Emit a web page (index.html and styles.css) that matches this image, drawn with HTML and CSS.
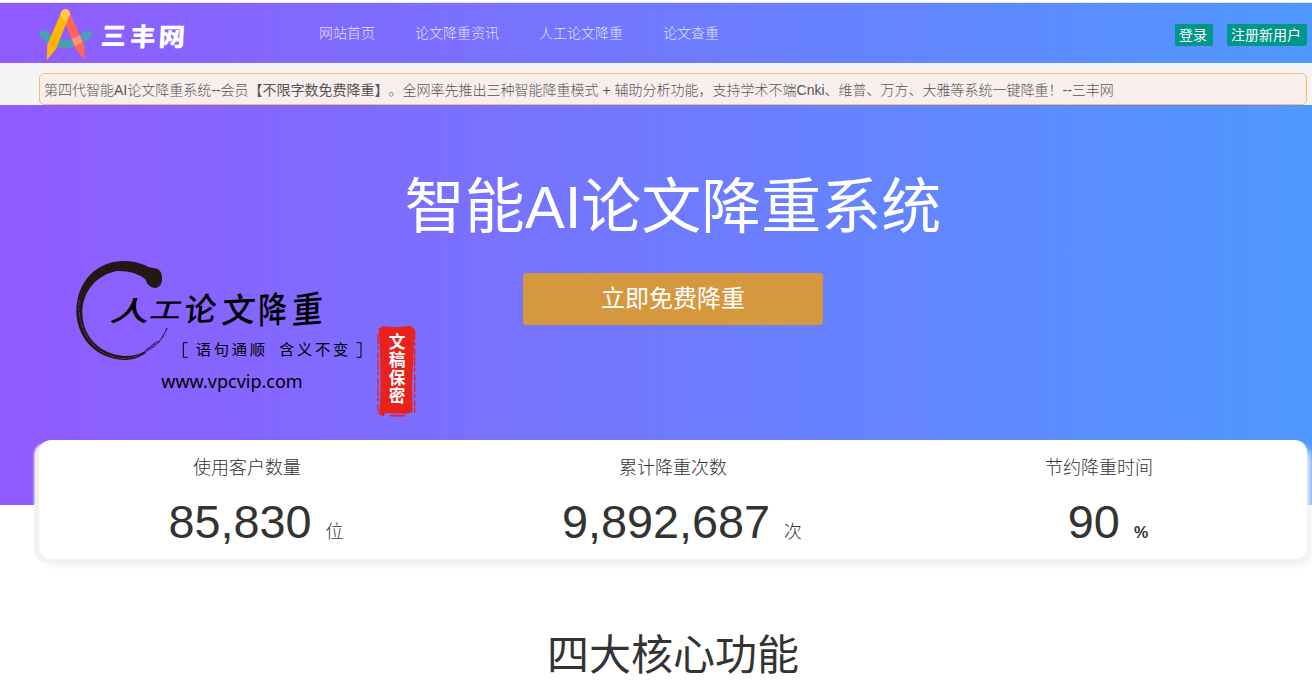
FILE: index.html
```
<!DOCTYPE html>
<html lang="zh-CN">
  <head>
    <title>智能AI论文降重系统</title>
    <meta charset="UTF-8">
    <meta name="viewport" content="width=device-width, initial-scale=1.0">
    <link rel="stylesheet" href="styles.css">
  </head>
  <body>
    <div class="header">
      <a class="logo">
        <svg width="165" height="58" viewBox="0 0 495 174">
          <path class="logo-smile" d="M40 88 Q106 146 173 88"/>
          <path class="logo-red" d="M95 30 A13 13 0 0 1 119 21 L162 120 L164 166 L137 132 Z"/>
          <path class="logo-cross" d="M125 101 L149 91 L158 112 L134 122 Z"/>
          <path class="logo-yellow" d="M94 21 A13 13 0 0 1 119 30 L78 132 L50 166 L52 120 Z"/>
          <path class="logo-dark" d="M58 105 L84 115 L79 130 L52 120 Z"/>
          <path class="logo-cap" d="M94 21 A13.500 13.500 0 0 1 119 21 L121 27 L108 55 L91 31 Z"/>
          <text class="logo-text" transform="translate(211 121) scale(.95 .95) skewX(-5)">三</text>
          <text class="logo-text" transform="translate(299 122) scale(.95 .95) skewX(-3)">丰</text>
          <text class="logo-text" transform="translate(384 122) scale(1 .95) skewX(-3)">网</text>
        </svg>
      </a>
      <div class="nav">
        <a>网站首页</a>
        <a>论文降重资讯</a>
        <a>人工论文降重</a>
        <a>论文查重</a>
      </div>
      <div class="user">
        <a class="btn">登录</a>
        <a class="btn">注册新用户</a>
      </div>
    </div>

    <div class="noticeBG">
      <div class="notice">第四代智能AI论文降重系统--会员<b>【不限字数免费降重】</b>。全网率先推出三种智能降重模式 + 辅助分析功能，支持学术不端Cnki、维普、万方、大雅等系统一键降重！--三丰网</div>
    </div>

    <div class="banner">
      <svg class="ad" width="370" height="180" viewBox="0 0 1110 540">
        <!-- brush circle -->
        <path class="ink" d="M306 92 Q310 60 285 54 Q268 56 255 46 Q215 28 165 35 C90 50 48 110 49 190 C54 270 110 325 190 330 C220 330 240 322 258 308 L254 304 C235 315 215 319 190 318 C120 312 68 260 67 190 C66 130 105 76 170 63 Q225 62 256 88 Q262 110 284 114 Q302 112 306 92Z"/>
        <path class="ink-tail" d="M254 304 C285 292 308 270 321 233"/>
        <path class="ink-tail2" d="M260 299 L292 274"/>
        <path class="ink-gap" d="M57 150 C50 235 95 312 180 325 C200 327 220 323 240 315"/>
        <g class="brush">
          <text transform="translate(148 213) scale(1.220 .85) skewX(-12)">人</text>
          <text transform="translate(266 203) scale(.97 .7) skewX(-12)">工</text>
          <text transform="translate(370 217) rotate(-4) skewX(-10)">论</text>
          <text transform="translate(482 219) rotate(-3) skewX(-8) scale(1.050 1.050)">文</text>
          <text transform="translate(595 222) rotate(-5) scale(.9 1.120) skewX(-6)">降</text>
          <text transform="translate(695 222) rotate(-5) scale(.96 1.120) skewX(-8)">重</text>
        </g>
        <path class="bracket" d="M383 278 H370 V322 H383 M890 278 H903 V322 H890"/>
        <text class="slogan" x="407" y="316" textLength="208">语句通顺</text>
        <text class="slogan" x="657" y="316" textLength="208">含义不变</text>
        <text class="site" x="304" y="414" textLength="424" lengthAdjust="spacingAndGlyphs">www.vpcvip.com</text>
        <!-- seal -->
        <path class="seal" d="M956 236 L968 229 L1008 232 L1050 227 L1063 236 L1060 330 L1056 400 L1058 486 L1040 491 L975 489 L972 499 L958 494 L962 420 L960 300 Z"/>
        <path class="seal-edge" d="M954 252 V488 M1064 240 V488"/>
        <path class="seal-foot" d="M990 497 H1036"/>
        <g class="seal-text">
          <text x="986" y="294">文</text>
          <text x="986" y="348">稿</text>
          <text x="986" y="402">保</text>
          <text x="986" y="456">密</text>
        </g>
      </svg>
      <div class="slide">
        <h1>智能AI论文降重系统</h1>
        <a class="start">立即免费降重</a>
      </div>
    </div>

    <div class="count">
      <div class="item">
        <p>使用客户数量</p>
        <div class="num">85,830<span>位</span></div>
      </div>
      <div class="item">
        <p>累计降重次数</p>
        <div class="num">9,892,687<span>次</span></div>
      </div>
      <div class="item">
        <p>节约降重时间</p>
        <div class="num">90<span class="percent">%</span></div>
      </div>
    </div>

    <h2>四大核心功能</h2>
  </body>
</html>
```
FILE: styles.css
```
* {
  box-sizing: border-box;
}
body {
  margin: 0;
  padding-top: 2px;
  font-family: "Liberation Sans", "Noto Sans CJK SC", sans-serif;
  font-size: 14px;
  font-weight: 300;
  text-spacing-trim: space-all;
  color: #333;
  background: #fff;
  overflow: hidden;
}
/* Top bar */
.header {
  display: flex;
  height: 61px;
  padding: 0 5px 0 30px;
  border-top: 1px solid #e6e6e6;
  background: linear-gradient(to right, #915bff, #4f98ff);
  background-clip: padding-box;
}
.logo {
  width: 289px;
  padding-top: 2px;
}
.logo svg {
  display: block;
}
.logo-smile {
  fill: none;
  stroke: #4b9db4;
  stroke-width: 25;
  stroke-linecap: round;
}
.logo-red {
  fill: #ff6659;
}
.logo-cross {
  fill: #ff917e;
}
.logo-yellow {
  fill: #ffb700;
}
.logo-dark {
  fill: #ffae18;
}
.logo-cap {
  fill: #ffc845;
}
.logo-text {
  font-size: 80px;
  font-weight: 900;
  fill: #fff;
}
.nav {
  display: flex;
  gap: 40px;
  line-height: 60px;
  color: rgba(255,255,255,.8);
}
.user {
  display: flex;
  gap: 14px;
  margin-left: auto;
  padding-top: 21px;
}
.btn {
  height: 22px;
  padding: 0 6px 0 4px;
  line-height: 22px;
  border-radius: 2px;
  font-weight: 400;
  color: #fff;
  background: #009688;
}
/* Notice */
.noticeBG {
  height: 42px;
  padding: 10px 5px 0 39px;
  background: #f5f5f5;
}
.notice {
  height: 32px;
  padding-left: 4px;
  line-height: 32px;
  border: 1px solid #ffb871;
  border-radius: 5px;
  white-space: nowrap;
  color: #555;
  background: #f8eeec;
}
/* Banner */
.banner {
  display: grid;
  height: 400px;
  padding: 0 5px 0 39px;
  background: linear-gradient(to right, #915bff, #4f98ff);
}
.ad {
  grid-area: 1 / 1;
  margin: 145px 0 0 21px;
}
.slide {
  grid-area: 1 / 1;
  display: flex;
  flex-direction: column;
  align-items: center;
  padding-top: 58px;
}
h1 {
  margin: 0 0 20px;
  font-size: 60px;
  font-weight: 400;
  line-height: 90px;
  color: #fff;
}
.start {
  width: 300px;
  height: 52px;
  line-height: 51px;
  border-radius: 4px;
  text-align: center;
  font-size: 24px;
  font-weight: 400;
  color: #fff;
  background: #d6983f;
}
.ink {
  fill: #231815;
}
.ink-tail, .ink-tail2 {
  fill: none;
  stroke: #33205a;
  stroke-width: 4;
  stroke-dasharray: 13 2 5 2;
}
.ink-gap {
  fill: none;
  stroke: #66518a;
  stroke-width: 2;
  stroke-dasharray: 18 5 7 4;
}
.brush {
  font-size: 96px;
  font-weight: 500;
}
.bracket {
  fill: none;
  stroke: #000;
  stroke-width: 3;
}
.slogan {
  font-size: 46px;
  font-weight: 400;
}
.site {
  font-family: "Noto Sans", sans-serif;
  font-size: 54px;
  font-weight: 400;
}
.seal {
  fill: #e8211b;
}
.seal-edge {
  fill: none;
  stroke: #e8211b;
  stroke-width: 4;
  stroke-dasharray: 30 5 12 8 20 3;
}
.seal-foot {
  fill: none;
  stroke: #e8211b;
  stroke-width: 5;
}
.seal-text {
  font-size: 50px;
  font-weight: 700;
  fill: #fff;
}
/* Counters */
.count {
  display: flex;
  position: relative;
  height: 119px;
  margin: -65px 5px 0 39px;
  border-radius: 12px;
  background: #fff;
  box-shadow: -5px 3px 2px #f1f1f1, 4px 7px 6px #f1f1f1;
}
.item {
  flex: none;
  width: 426px;
  margin-left: -5px;
  text-align: center;
}
.item + .item {
  margin-left: 0;
}
.item p {
  margin: 0;
  padding-top: 15px;
  font-size: 18px;
  line-height: 27px;
}
.num {
  padding-left: 18px;
  font-size: 46.800px;
  line-height: 80px;
}
.num span {
  margin-left: 14px;
  font-size: 18px;
}
.num .percent {
  font-size: 16px;
  font-weight: 700;
}
h2 {
  margin: 65px 0 0;
  padding-left: 34px;
  text-align: center;
  font-size: 42px;
  font-weight: 400;
  line-height: 63px;
}
```
